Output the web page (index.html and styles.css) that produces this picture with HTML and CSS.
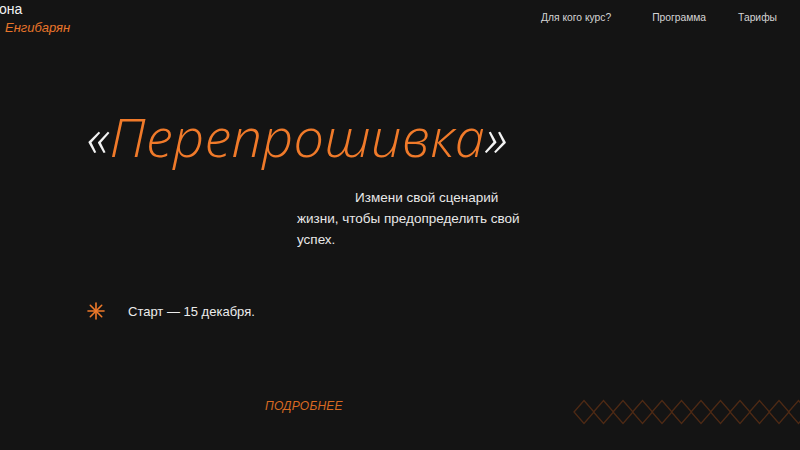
FILE: index.html
```html
<!DOCTYPE html>
<html lang="ru">
<head>
<meta charset="utf-8">
<link rel="stylesheet" href="styles.css">
</head>
<body>
<div class="page">
  <header class="top">
    <div class="brand">
      <div class="brand-first">она</div>
      <div class="brand-last">Енгибарян</div>
    </div>
    <nav class="nav">
      <a class="nav-link nav-1">Для кого курс?</a>
      <a class="nav-link nav-2">Программа</a>
      <a class="nav-link nav-3">Тарифы</a>
    </nav>
  </header>
  <main class="hero">
    <h1 class="title"><span class="quote">«</span>Перепрошивка<span class="quote">»</span></h1>
    <p class="lead"><span class="indent"></span>Измени свой сценарий жизни, чтобы предопределить свой успех.</p>
    <div class="start">
      <svg class="star" width="20" height="20" viewBox="0 0 20 20">
        <g stroke="#f07a2a" stroke-width="1.6" stroke-linecap="round">
          <line x1="10" y1="2" x2="10" y2="18"/>
          <line x1="2" y1="10" x2="18" y2="10"/>
          <line x1="4.3" y1="4.3" x2="15.7" y2="15.7"/>
          <line x1="15.7" y1="4.3" x2="4.3" y2="15.7"/>
        </g>
      </svg>
      <span class="start-text">Старт — 15 декабря.</span>
    </div>
    <div class="bottom">
      <a class="more">ПОДРОБНЕЕ</a>
      <svg class="diamonds" width="230" height="26" viewBox="0 0 230 26">
        <g fill="none" stroke="#4e2a15" stroke-width="1.3">
          <path d="M1 13 L11 1.5 L21 13 L11 24.5 Z"/>
          <path d="M20.5 13 L30.5 1.5 L40.5 13 L30.5 24.5 Z"/>
          <path d="M40 13 L50 1.5 L60 13 L50 24.5 Z"/>
          <path d="M59.5 13 L69.5 1.5 L79.5 13 L69.5 24.5 Z"/>
          <path d="M79 13 L89 1.5 L99 13 L89 24.5 Z"/>
          <path d="M98.5 13 L108.5 1.5 L118.5 13 L108.5 24.5 Z"/>
          <path d="M118 13 L128 1.5 L138 13 L128 24.5 Z"/>
          <path d="M137.5 13 L147.5 1.5 L157.5 13 L147.5 24.5 Z"/>
          <path d="M157 13 L167 1.5 L177 13 L167 24.5 Z"/>
          <path d="M176.5 13 L186.5 1.5 L196.5 13 L186.5 24.5 Z"/>
          <path d="M196 13 L206 1.5 L216 13 L206 24.5 Z"/>
          <path d="M215.5 13 L225.5 1.5 L235.5 13 L225.5 24.5 Z"/>
        </g>
      </svg>
    </div>
  </main>
</div>
</body>
</html>
```
FILE: styles.css
```css
html, body {
  margin: 0;
  padding: 0;
  background: #141414;
  width: 800px;
  height: 450px;
  overflow: hidden;
}
.page {
  font-family: "Liberation Sans", Arial, sans-serif;
  color: #e6e6e6;
  height: 450px;
  display: flex;
  flex-direction: column;
}
.top {
  display: flex;
  justify-content: space-between;
  align-items: flex-start;
  height: 60px;
}
.brand {
  padding-top: 1px;
}
.brand-first {
  font-size: 14px;
  line-height: 16px;
  color: #f2f2f2;
  margin-left: -1px;
}
.brand-last {
  font-size: 13px;
  line-height: 16px;
  font-style: italic;
  color: #e8742a;
  margin-left: 5px;
  margin-top: 3px;
}
.nav {
  display: flex;
  padding-top: 11px;
  padding-right: 23px;
}
.nav-link {
  font-size: 10.3px;
  color: #d4d4d4;
  line-height: 14px;
}
.nav-1 { margin-left: 3px; margin-right: 41px; }
.nav-2 { margin-right: 32px; }
.hero {
  flex: 1;
  display: flex;
  flex-direction: column;
}
.title {
  margin: 46px 0 0 87px;
  font-family: "Open Sans", sans-serif;
  font-weight: 300;
  font-style: italic;
  font-size: 54px;
  line-height: 60px;
  color: #f07a2a;
  letter-spacing: 0.4px;
}
.quote {
  color: #f4f4f4;
}
.lead {
  margin: 21px 0 0 297px;
  width: 232px;
  font-size: 13.5px;
  line-height: 21px;
  color: #e8e8e8;
}
.indent {
  display: inline-block;
  width: 58px;
}
.start {
  display: flex;
  align-items: center;
  margin: 51px 0 0 86px;
}
.star {
  margin-right: 22px;
}
.start-text {
  font-size: 13px;
  color: #ececec;
}
.bottom {
  display: flex;
  align-items: flex-start;
  justify-content: space-between;
  margin-top: 72px;
}
.more {
  margin-left: 265px;
  margin-top: 6px;
  font-size: 12px;
  font-style: italic;
  color: #d86a22;
  letter-spacing: 0.2px;
}
.diamonds {
  margin-right: -3px;
  margin-top: 6px;
}
```
